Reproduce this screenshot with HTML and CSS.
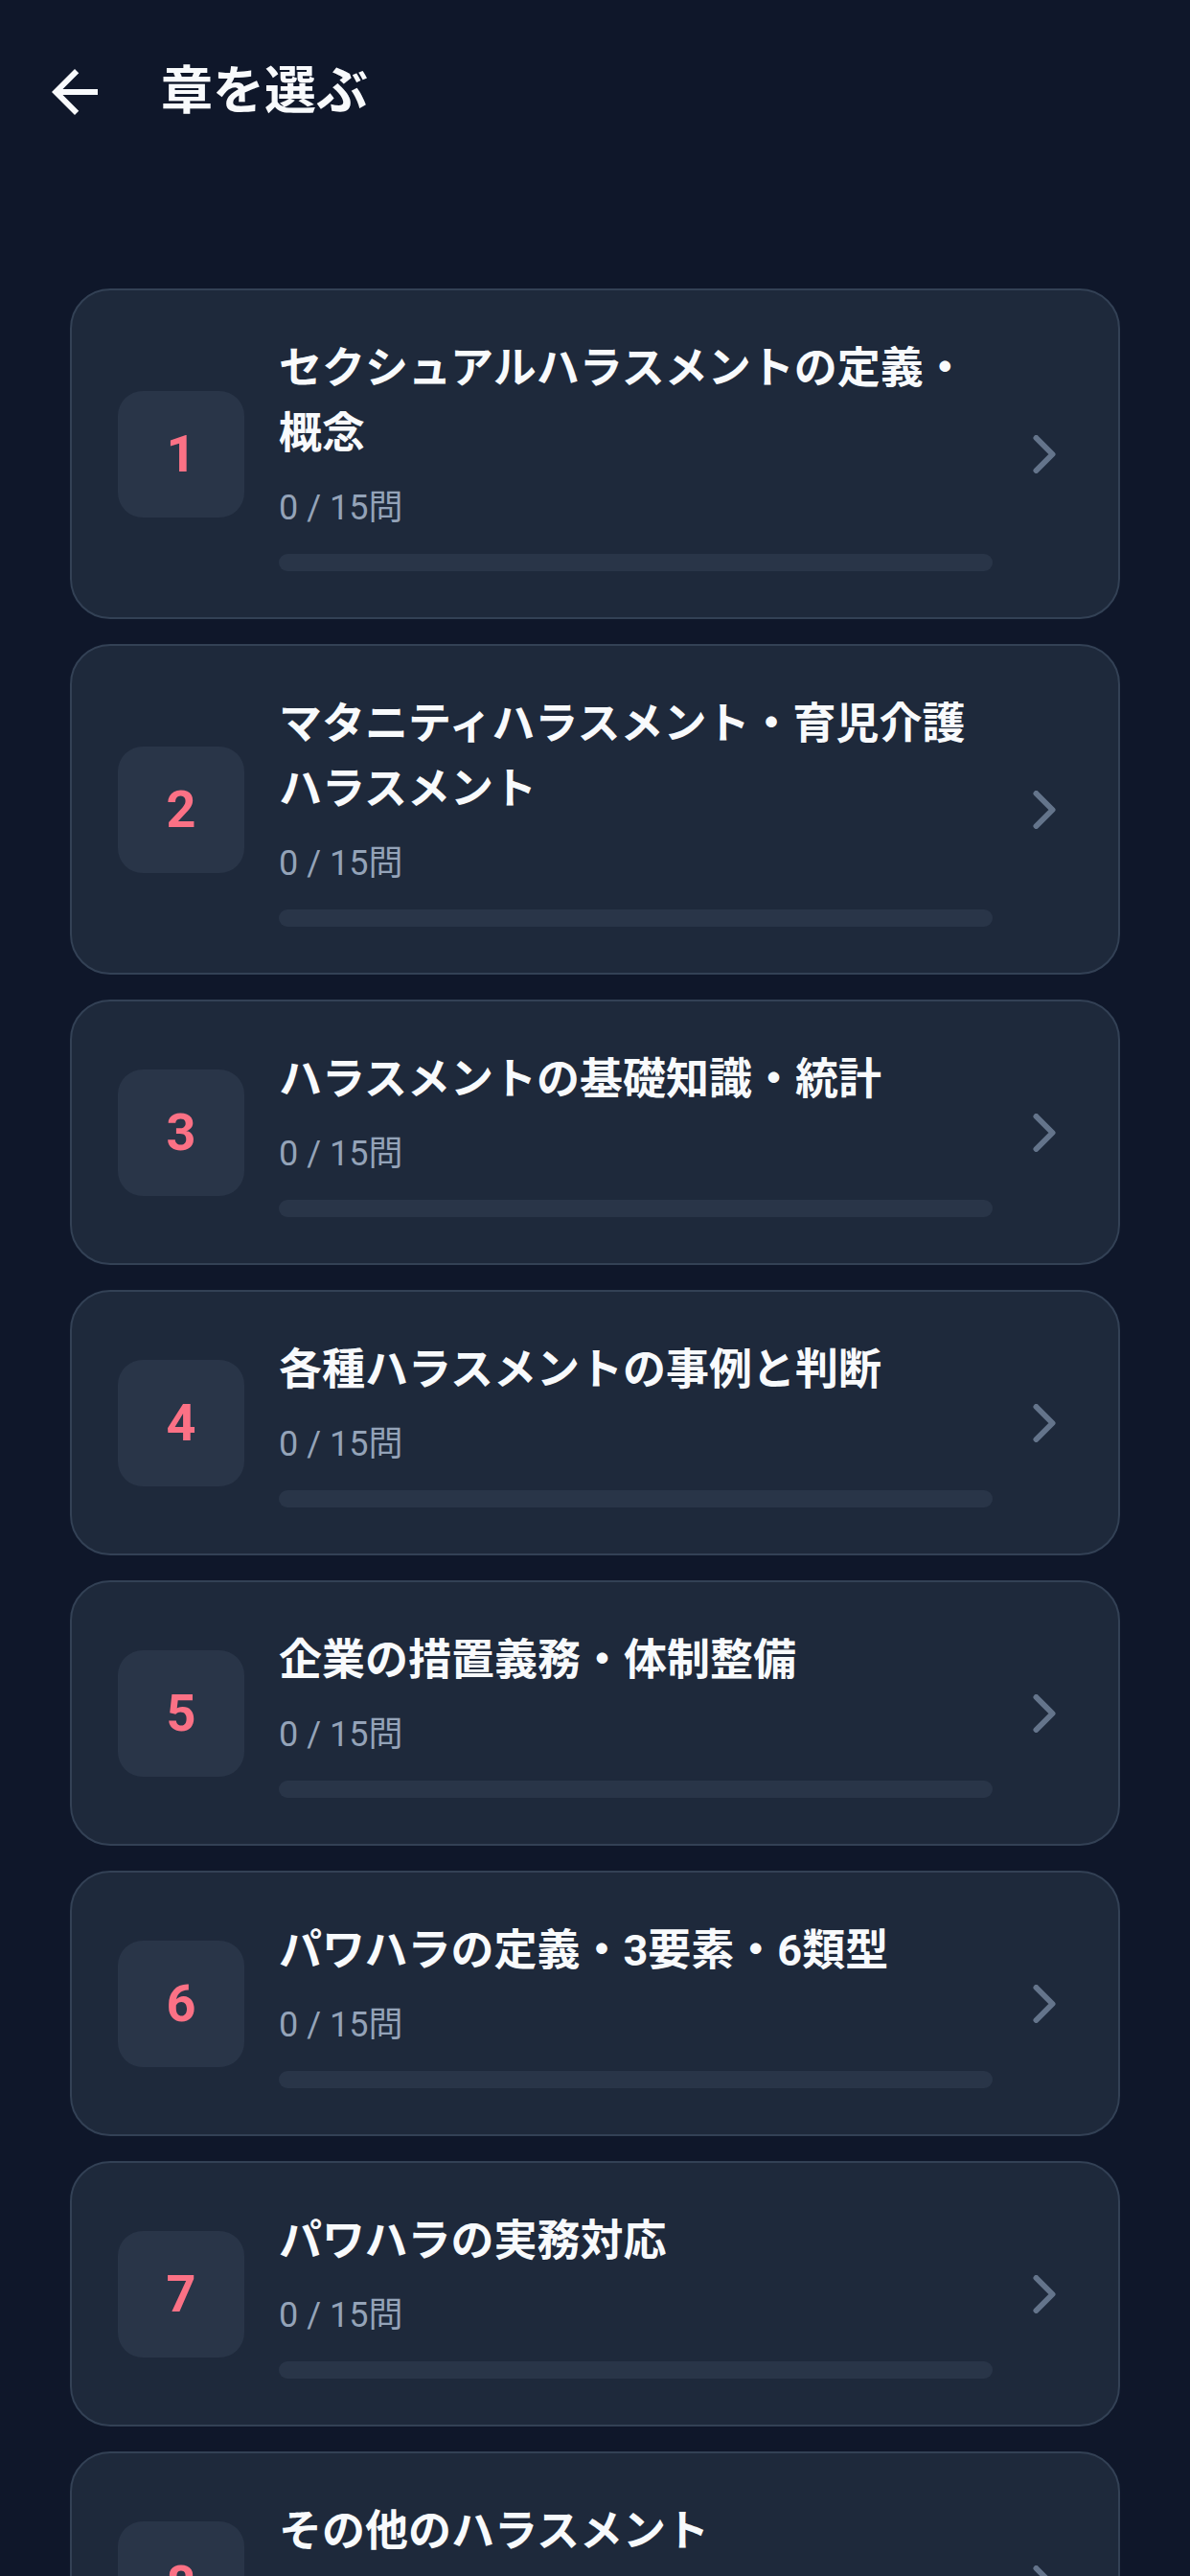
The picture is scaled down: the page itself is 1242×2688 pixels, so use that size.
FILE: index.html
```html
<!DOCTYPE html>
<html lang="ja">
<head>
    <meta charset="UTF-8">
    <title>章を選ぶ</title>
    <link rel="stylesheet" href="styles.css">
</head>
<body>
    <div class="header">
        <svg class="back" viewBox="0 0 24 24"><path d="M20 11H7.83l5.59-5.59L12 4l-8 8 8 8 1.41-1.41L7.83 13H20v-2z"/></svg>
        <h1 class="title">章を選ぶ</h1>
    </div>

    <div class="list">
        <div class="card">
            <div class="num">1</div>
            <div class="info">
                <div class="name">セクシュアルハラスメントの定義・概念</div>
                <div class="count">0 / 15問</div>
                <div class="bar"></div>
            </div>
            <svg class="arrow" viewBox="0 0 24 40"><polyline points="3.5,3 20.5,20 3.5,37"/></svg>
        </div>
        <div class="card">
            <div class="num">2</div>
            <div class="info">
                <div class="name">マタニティハラスメント・育児介護ハラスメント</div>
                <div class="count">0 / 15問</div>
                <div class="bar"></div>
            </div>
            <svg class="arrow" viewBox="0 0 24 40"><polyline points="3.5,3 20.5,20 3.5,37"/></svg>
        </div>
        <div class="card">
            <div class="num">3</div>
            <div class="info">
                <div class="name">ハラスメントの基礎知識・統計</div>
                <div class="count">0 / 15問</div>
                <div class="bar"></div>
            </div>
            <svg class="arrow" viewBox="0 0 24 40"><polyline points="3.5,3 20.5,20 3.5,37"/></svg>
        </div>
        <div class="card">
            <div class="num">4</div>
            <div class="info">
                <div class="name">各種ハラスメントの事例と判断</div>
                <div class="count">0 / 15問</div>
                <div class="bar"></div>
            </div>
            <svg class="arrow" viewBox="0 0 24 40"><polyline points="3.5,3 20.5,20 3.5,37"/></svg>
        </div>
        <div class="card">
            <div class="num">5</div>
            <div class="info">
                <div class="name">企業の措置義務・体制整備</div>
                <div class="count">0 / 15問</div>
                <div class="bar"></div>
            </div>
            <svg class="arrow" viewBox="0 0 24 40"><polyline points="3.5,3 20.5,20 3.5,37"/></svg>
        </div>
        <div class="card">
            <div class="num">6</div>
            <div class="info">
                <div class="name">パワハラの定義・3要素・6類型</div>
                <div class="count">0 / 15問</div>
                <div class="bar"></div>
            </div>
            <svg class="arrow" viewBox="0 0 24 40"><polyline points="3.5,3 20.5,20 3.5,37"/></svg>
        </div>
        <div class="card">
            <div class="num">7</div>
            <div class="info">
                <div class="name">パワハラの実務対応</div>
                <div class="count">0 / 15問</div>
                <div class="bar"></div>
            </div>
            <svg class="arrow" viewBox="0 0 24 40"><polyline points="3.5,3 20.5,20 3.5,37"/></svg>
        </div>
        <div class="card">
            <div class="num">8</div>
            <div class="info">
                <div class="name">その他のハラスメント</div>
                <div class="count">0 / 15問</div>
                <div class="bar"></div>
            </div>
            <svg class="arrow" viewBox="0 0 24 40"><polyline points="3.5,3 20.5,20 3.5,37"/></svg>
        </div>
    </div>
</body>
</html>
```

FILE: styles.css
```css
body{
    margin:0;
    background:#0f172a;
    font-family:Roboto, "Noto Sans CJK JP", sans-serif;
    color:#f8fafc;
}
.header{
    height:192px;
    display:flex;
    align-items:center;
    padding-left:42px;
}
.back{
    width:72px;
    height:72px;
    fill:#f8fafc;
    flex-shrink:0;
}
.title{
    margin:0 0 0 54px;
    font-size:54px;
    font-weight:700;
    line-height:72px;
}
.list{
    padding:109px 73px 0;
    display:flex;
    flex-direction:column;
    gap:26px;
}
.card{
    display:flex;
    align-items:center;
    background:#1e293b;
    border:2px solid #334155;
    border-radius:42px;
    padding:48px;
}
.num{
    width:132px;
    height:132px;
    flex-shrink:0;
    border-radius:26px;
    background:#293548;
    color:#fb7185;
    font-size:54px;
    font-weight:700;
    display:flex;
    align-items:center;
    justify-content:center;
}
.info{
    flex:1;
    margin-left:36px;
    min-width:0;
}
.name{
    font-size:45px;
    font-weight:700;
    line-height:68px;
}
.count{
    margin-top:19px;
    font-size:36px;
    line-height:48px;
    color:#94a3b8;
}
.bar{
    margin-top:24px;
    height:18px;
    border-radius:9px;
    background:#293548;
}
.arrow{
    width:24px;
    height:40px;
    flex-shrink:0;
    margin:0 17px 0 42px;
    fill:none;
    stroke:#64748b;
    stroke-width:6;
    stroke-linecap:round;
    stroke-linejoin:round;
}
```
